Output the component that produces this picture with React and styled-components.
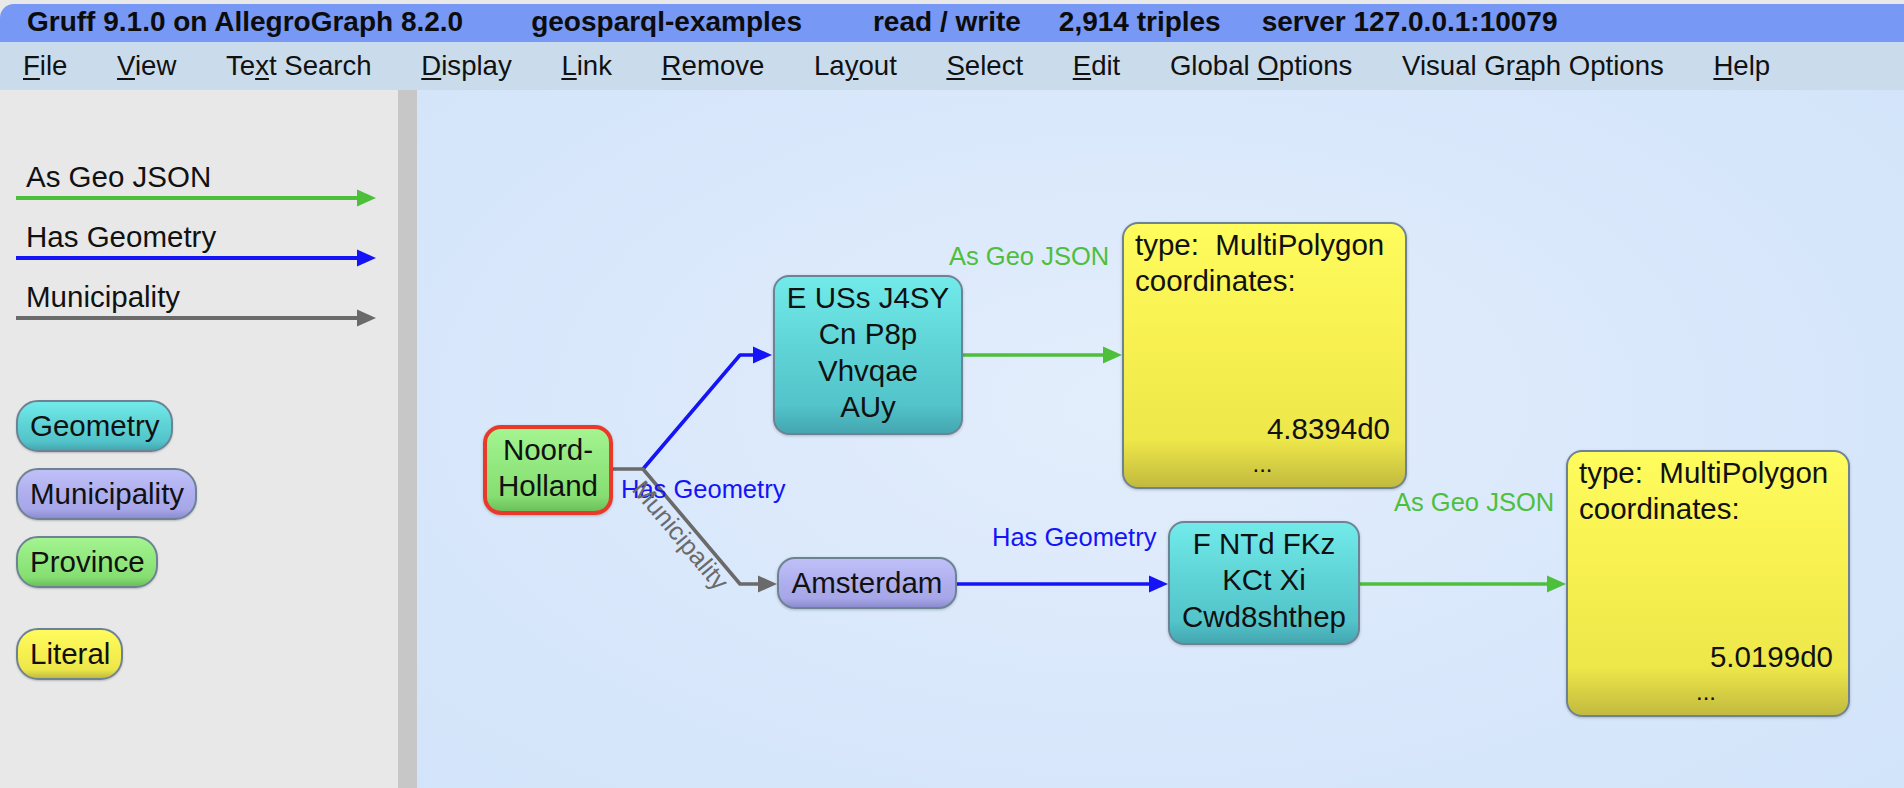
import React from 'react';
import styled, { createGlobalStyle } from 'styled-components';

const GlobalStyle = createGlobalStyle`
  html, body {
    margin: 0;
    padding: 0;
    background: #e8e8e8;
    overflow: hidden;
  }
  body {
    font-family: "Liberation Sans", Arial, Helvetica, sans-serif;
    color: #111;
  }
`;

const palette = {
  geometry: { top: '#72eaea', mid: '#5fd4d6', low: '#52c4ca', bottom: '#44a6b0' },
  municipality: { top: '#c0c0f8', mid: '#b0b0f0', low: '#a6a6e8', bottom: '#8c8cd0' },
  province: { top: '#a4f490', mid: '#92e87e', low: '#86de72', bottom: '#6cc05c' },
  literal: { top: '#fffc5e', mid: '#f7f050', low: '#ede74a', bottom: '#c2ba3e' },
};

const fill = kind => {
  const c = palette[kind];
  return `linear-gradient(to bottom, ${c.top} 0%, ${c.mid} 45%, ${c.low} 82%, ${c.bottom} 100%)`;
};

const Window = styled.div`
  width: 1904px;
  height: 788px;
  display: flex;
  flex-direction: column;
  padding-top: 4px;
  box-sizing: border-box;
  background: #e8e8e8;
`;

const TitleBar = styled.div`
  height: 38px;
  flex: none;
  display: flex;
  align-items: center;
  padding: 0 0 3px 27px;
  box-sizing: border-box;
  background: #7798f4;
  border-top-left-radius: 14px;
  font-weight: bold;
  font-size: 28px;
  line-height: 32px;
  color: #0c0c0c;
  white-space: pre;
`;

const TitleItem = styled.span`
  margin-left: ${p => p.$gap || 0}px;
`;

const MenuBar = styled.div`
  height: 48px;
  flex: none;
  display: flex;
  align-items: center;
  gap: 49.6px;
  padding-left: 23px;
  background: #cadcec;
  font-size: 27.6px;
  line-height: 32px;
  color: #111;
`;

const MenuItem = styled.span`
  white-space: pre;
`;

const Key = styled.span`
  text-decoration: underline;
  text-decoration-thickness: 2px;
  text-underline-offset: 3px;
`;

const Body = styled.div`
  flex: 1;
  display: flex;
  min-height: 0;
`;

const Legend = styled.div`
  width: 398px;
  flex: none;
  background: #e8e8e8;
  padding: 72px 0 0 16px;
  box-sizing: border-box;
  display: flex;
  flex-direction: column;
  align-items: flex-start;
`;

const Divider = styled.div`
  width: 19px;
  flex: none;
  background: #c7c7c7;
`;

const EdgeKey = styled.div`
  display: flex;
  flex-direction: column;
  margin-bottom: 15px;

  & > svg {
    margin-top: -3px;
  }
`;

const EdgeKeyLabel = styled.div`
  font-size: 29.5px;
  line-height: 30px;
  padding-left: 10px;
`;

const Pills = styled.div`
  margin-top: 58px;
  display: flex;
  flex-direction: column;
  align-items: flex-start;
  gap: 16px;
`;

const Pill = styled.div`
  height: 52px;
  box-sizing: border-box;
  display: flex;
  align-items: center;
  padding: 0 11px 0 12px;
  margin-top: ${p => p.$push || 0}px;
  border: 2px solid #6d8294;
  border-radius: 22px;
  background: ${p => fill(p.$kind)};
  font-size: 29.5px;
  box-shadow: 0 1px 2px rgba(0, 0, 0, 0.2);
`;

const Canvas = styled.div`
  flex: 1;
  position: relative;
  overflow: hidden;
  background: radial-gradient(ellipse 70% 80% at 48% 45%, #e3eefc 0%, #dae8fb 50%, #d2e4fa 100%);
`;

const Edges = styled.svg`
  position: absolute;
  left: 0;
  top: 0;
  width: 100%;
  height: 100%;
  font-family: "Liberation Sans", Arial, Helvetica, sans-serif;
  font-size: 25.5px;
`;

const Node = styled.div`
  position: absolute;
  left: ${p => p.$x - 417}px;
  top: ${p => p.$y - 90}px;
  width: ${p => p.$w}px;
  height: ${p => p.$h}px;
  box-sizing: border-box;
  border: ${p => (p.$selected ? '4px solid #e8392a' : '2px solid #6d8294')};
  border-radius: ${p => p.$radius || 16}px;
  background: ${p => fill(p.$kind)};
  box-shadow: 0 1px 3px rgba(0, 0, 0, 0.22);
  font-size: 29.5px;
  line-height: 36.3px;
  text-align: center;
  padding-top: 3px;
`;

const PillNode = styled(Node)`
  display: flex;
  align-items: center;
  justify-content: center;
  padding-top: 0;
`;

const Literal = styled(Node)`
  display: flex;
  flex-direction: column;
  text-align: left;
  padding: 3px 15px 6px 11px;
  border-radius: 16px;
`;

const LiteralLine = styled.div`
  white-space: pre;
`;

const LiteralValue = styled.div`
  margin-top: auto;
  text-align: right;
`;

const Ellipsis = styled.div`
  text-align: center;
  line-height: 34px;
  font-size: 24px;
`;

const COLORS = { green: '#4dbf3b', blue: '#1414f6', gray: '#6a6a6a' };

const KeyArrow = ({ color }) => (
  <svg width="362" height="18" viewBox="0 0 362 18">
    <line x1="0" y1="9" x2="344" y2="9" stroke={color} strokeWidth="4" />
    <polygon points="341,0.5 360,9 341,17.5" fill={color} />
  </svg>
);

const Arrow = ({ points, color }) => {
  const [x1, y1] = points[points.length - 2];
  const [x2, y2] = points[points.length - 1];
  const a = Math.atan2(y2 - y1, x2 - x1);
  const len = 19;
  const half = 8.5;
  const bx = x2 - len * Math.cos(a);
  const by = y2 - len * Math.sin(a);
  const px = -Math.sin(a) * half;
  const py = Math.cos(a) * half;
  const line = points.slice(0, -1).concat([[bx + Math.cos(a), by + Math.sin(a)]]);
  return (
    <g>
      <polyline
        points={line.map(p => p.join(',')).join(' ')}
        fill="none"
        stroke={color}
        strokeWidth="3.6"
        strokeLinejoin="round"
      />
      <polygon points={`${x2},${y2} ${bx + px},${by + py} ${bx - px},${by - py}`} fill={color} />
    </g>
  );
};

const menu = [
  ['', 'F', 'ile'],
  ['', 'V', 'iew'],
  ['Te', 'x', 't Search'],
  ['', 'D', 'isplay'],
  ['', 'L', 'ink'],
  ['', 'R', 'emove'],
  ['La', 'y', 'out'],
  ['', 'S', 'elect'],
  ['', 'E', 'dit'],
  ['Global ', 'O', 'ptions'],
  ['Visual Gr', 'a', 'ph Options'],
  ['', 'H', 'elp'],
];

const App = () => (
  <>
    <GlobalStyle />
    <Window>
      <TitleBar>
        <TitleItem>Gruff 9.1.0 on AllegroGraph 8.2.0</TitleItem>
        <TitleItem $gap={68}>geosparql-examples</TitleItem>
        <TitleItem $gap={71}>read / write</TitleItem>
        <TitleItem $gap={38}>2,914 triples</TitleItem>
        <TitleItem $gap={41}>server 127.0.0.1:10079</TitleItem>
      </TitleBar>

      <MenuBar>
        {menu.map(([pre, key, post]) => (
          <MenuItem key={pre + key + post}>
            {pre}
            <Key>{key}</Key>
            {post}
          </MenuItem>
        ))}
      </MenuBar>

      <Body>
        <Legend>
          <EdgeKey>
            <EdgeKeyLabel>As Geo JSON</EdgeKeyLabel>
            <KeyArrow color={COLORS.green} />
          </EdgeKey>
          <EdgeKey>
            <EdgeKeyLabel>Has Geometry</EdgeKeyLabel>
            <KeyArrow color={COLORS.blue} />
          </EdgeKey>
          <EdgeKey>
            <EdgeKeyLabel>Municipality</EdgeKeyLabel>
            <KeyArrow color={COLORS.gray} />
          </EdgeKey>

          <Pills>
            <Pill $kind="geometry">Geometry</Pill>
            <Pill $kind="municipality">Municipality</Pill>
            <Pill $kind="province">Province</Pill>
            <Pill $kind="literal" $push={24}>Literal</Pill>
          </Pills>
        </Legend>

        <Divider />

        <Canvas>
          <Edges viewBox="417 90 1487 698" preserveAspectRatio="xMinYMin meet">
            <Arrow color={COLORS.blue} points={[[643, 469], [740, 355], [772, 355]]} />
            <Arrow color={COLORS.gray} points={[[613, 469], [643, 469], [740, 584], [777, 584]]} />
            <Arrow color={COLORS.green} points={[[963, 355], [1122, 355]]} />
            <Arrow color={COLORS.blue} points={[[957, 584], [1168, 584]]} />
            <Arrow color={COLORS.green} points={[[1360, 584], [1566, 584]]} />

            <text x="949" y="265" fill={COLORS.green}>As Geo JSON</text>
            <text x="621" y="498" fill={COLORS.blue}>Has Geometry</text>
            <text x="992" y="546" fill={COLORS.blue}>Has Geometry</text>
            <text x="1394" y="511" fill={COLORS.green}>As Geo JSON</text>
            <text transform="translate(631 490) rotate(50)" fill={COLORS.gray}>Municipality</text>
          </Edges>

          <Node $kind="province" $selected $x={483} $y={425} $w={130} $h={90} $radius={18}>
            Noord-
            <br />
            Holland
          </Node>

          <Node $kind="geometry" $x={773} $y={275} $w={190} $h={160}>
            E USs J4SY
            <br />
            Cn P8p
            <br />
            Vhvqae
            <br />
            AUy
          </Node>

          <PillNode $kind="municipality" $x={777} $y={557} $w={180} $h={52} $radius={18}>
            Amsterdam
          </PillNode>

          <Node $kind="geometry" $x={1168} $y={521} $w={192} $h={124}>
            F NTd FKz
            <br />
            KCt Xi
            <br />
            Cwd8shthep
          </Node>

          <Literal $kind="literal" $x={1122} $y={222} $w={285} $h={267}>
            <LiteralLine>type:  MultiPolygon</LiteralLine>
            <LiteralLine>coordinates:</LiteralLine>
            <LiteralValue>4.8394d0</LiteralValue>
            <Ellipsis>...</Ellipsis>
          </Literal>

          <Literal $kind="literal" $x={1566} $y={450} $w={284} $h={267}>
            <LiteralLine>type:  MultiPolygon</LiteralLine>
            <LiteralLine>coordinates:</LiteralLine>
            <LiteralValue>5.0199d0</LiteralValue>
            <Ellipsis>...</Ellipsis>
          </Literal>
        </Canvas>
      </Body>
    </Window>
  </>
);

export default App;
